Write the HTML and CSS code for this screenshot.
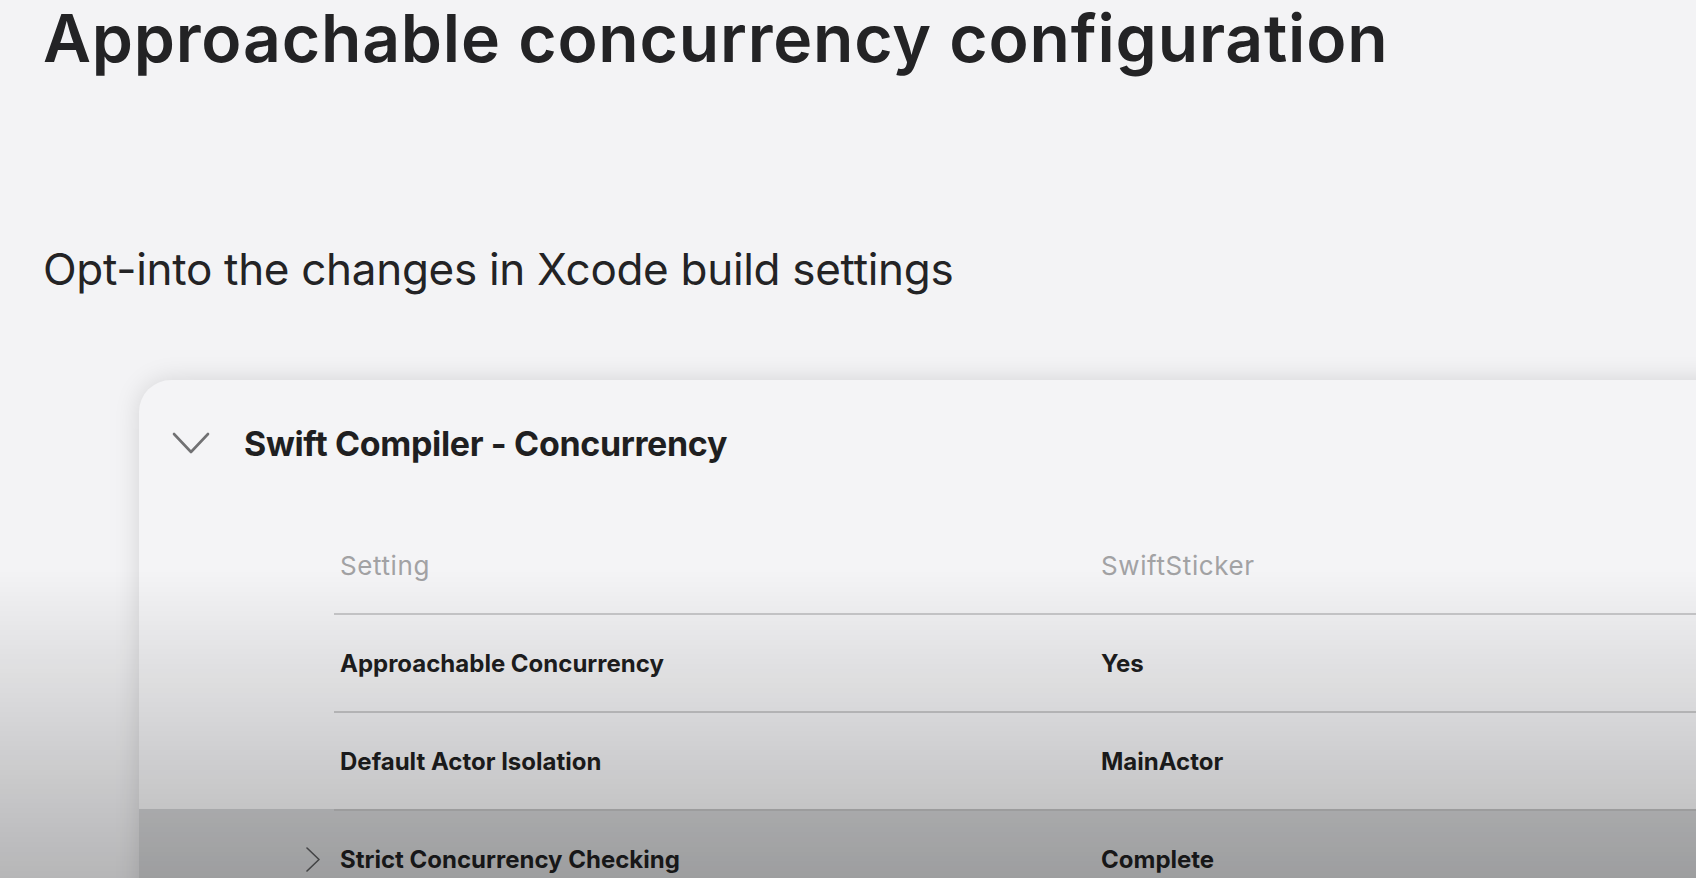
FILE: index.html
```html
<!DOCTYPE html>
<html lang="en">
<head>
<meta charset="utf-8">
<title>Approachable concurrency configuration</title>
<link rel="stylesheet" href="styles.css">
</head>
<body>
<main class="page">
  <h1 class="title">Approachable concurrency configuration</h1>
  <p class="subtitle">Opt-into the changes in Xcode build settings</p>

  <section class="card">
    <header class="card-header">
      <svg class="chev-down" width="40" height="24" viewBox="0 0 40 24" aria-hidden="true">
        <polyline points="3,3 20,21 37,3" fill="none" stroke="#717173" stroke-width="2.6" stroke-linecap="round" stroke-linejoin="round"/>
      </svg>
      <h2 class="card-title">Swift Compiler - Concurrency</h2>
    </header>

    <div class="table">
      <div class="row-wrap">
        <div class="row head">
          <span class="cell c1">Setting</span>
          <span class="cell c2">SwiftSticker</span>
        </div>
      </div>
      <div class="row-wrap">
        <div class="row">
          <span class="cell c1">Approachable Concurrency</span>
          <span class="cell c2">Yes</span>
        </div>
      </div>
      <div class="row-wrap">
        <div class="row">
          <span class="cell c1">Default Actor Isolation</span>
          <span class="cell c2">MainActor</span>
        </div>
      </div>
      <div class="row-wrap dim">
        <div class="row">
          <svg class="chev-right" width="16" height="26" viewBox="0 0 16 26" aria-hidden="true">
            <polyline points="2,1 14,12.5 2,24" fill="none" stroke="#58595b" stroke-width="1.6" stroke-linecap="round" stroke-linejoin="round"/>
          </svg>
          <span class="cell c1">Strict Concurrency Checking</span>
          <span class="cell c2">Complete</span>
        </div>
      </div>
    </div>
  </section>
</main>
<div class="fade" aria-hidden="true"></div>
</body>
</html>
```
FILE: styles.css
```css
html, body {
  margin: 0;
  padding: 0;
  height: 100%;
  overflow: hidden;
  background: #f3f3f5;
}

body {
  font-family: Inter, "Noto Sans", "Liberation Sans", sans-serif;
  color: #1f1f21;
}

.page {
  padding: 5px 0 0 43px;
}

.title {
  margin: 0;
  font-size: 66px;
  line-height: 66px;
  font-weight: 600;
  letter-spacing: 0.8px;
  color: #232325;
  white-space: nowrap;
}

.subtitle {
  margin: 176px 0 0 0;
  font-size: 44px;
  line-height: 44px;
  font-weight: 400;
  letter-spacing: -0.3px;
  color: #232325;
  white-space: nowrap;
}

.card {
  margin: 89px 0 0 96px;
  width: 1700px;
  height: 700px;
  background: #f4f4f6;
  border-radius: 32px 0 0 0;
  box-shadow: 0 0 26px rgba(0, 0, 0, 0.13);
  overflow: hidden;
}

.card-header {
  display: flex;
  align-items: center;
  height: 48px;
  padding: 40px 0 0 32px;
}

.chev-down {
  display: block;
  flex: none;
  margin-top: -2px;
}

.card-title {
  margin: 0 0 0 33px;
  font-size: 34px;
  line-height: 48px;
  font-weight: 700;
  letter-spacing: -0.35px;
  color: #1f1f21;
  white-space: nowrap;
}

.table {
  margin-top: 47px;
}

.row-wrap {
  padding-left: 195px;
}

.row-wrap.dim {
  background: #d2d3d5;
}

.row {
  position: relative;
  display: flex;
  align-items: center;
  height: 96px;
  padding-top: 1px;
  box-sizing: content-box;
  border-top: 2px solid #cacacc;
}

.row.head {
  height: 94px;
  padding-top: 4px;
  border-top: none;
}

.row-wrap .row:not(.head) {
  height: 95px;
}

.row-wrap.dim .row {
  border-top-color: #c2c2c4;
}

.cell {
  white-space: nowrap;
  font-size: 24px;
  line-height: 30px;
  font-weight: 700;
  letter-spacing: 0;
  color: #1f1f21;
}

.c1 {
  width: 755px;
  padding-left: 6px;
  flex: none;
}

.c2 {
  padding-left: 6px;
}

.head .cell {
  font-size: 26px;
  font-weight: 400;
  letter-spacing: 0.6px;
  color: #a2a2a4;
}

.chev-right {
  position: absolute;
  left: -29px;
  top: 36px;
}

.fade {
  position: fixed;
  left: 0;
  top: 0;
  width: 100%;
  height: 100%;
  pointer-events: none;
  background: linear-gradient(to bottom, rgba(0, 0, 0, 0) 0px, rgba(0, 0, 0, 0) 570px, rgba(0, 0, 0, 0.25) 878px);
}
```
